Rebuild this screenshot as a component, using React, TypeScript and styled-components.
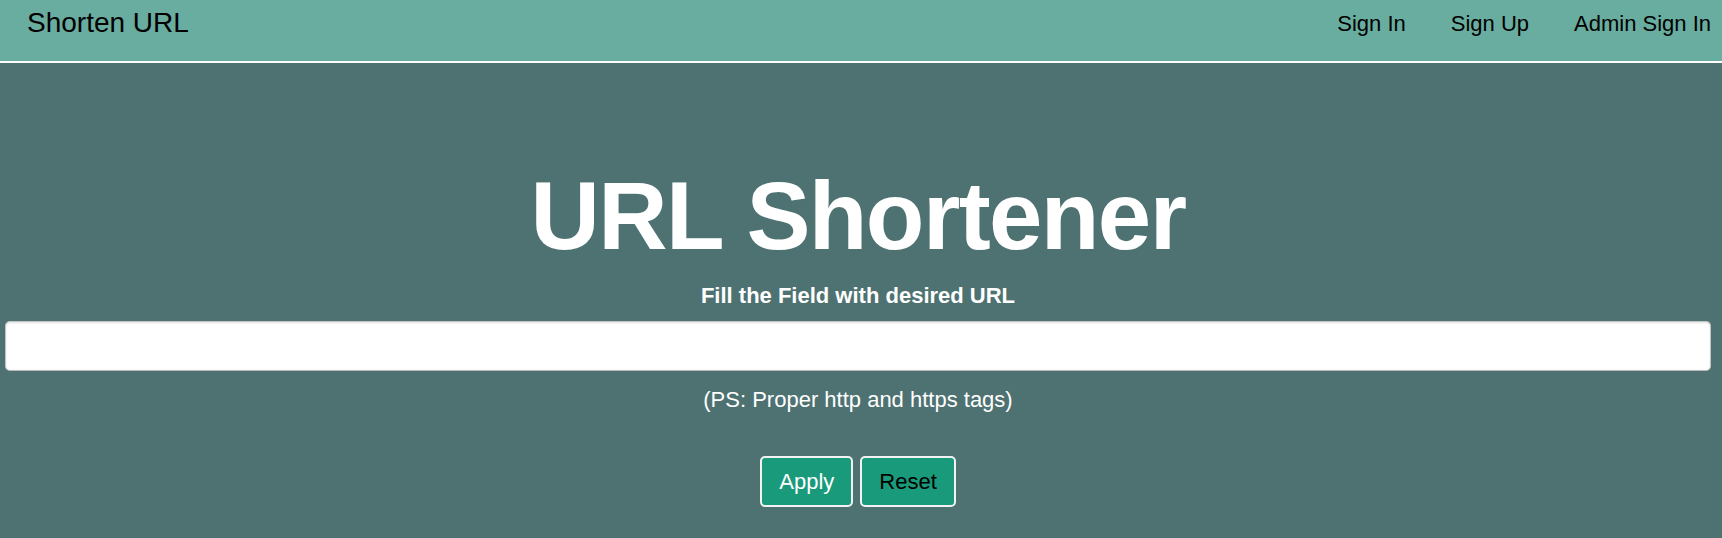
import React from "react";
import styled, { createGlobalStyle } from "styled-components";

const GlobalStyle = createGlobalStyle`
  html, body {
    margin: 0;
    padding: 0;
    background: #4e7271;
  }
  body {
    font-family: "Liberation Sans", Arial, Helvetica, sans-serif;
  }
  * { box-sizing: border-box; }
`;

const Page = styled.div`
  width: 100%;
  min-height: 538px;
  background: #4e7271;
`;

const NavBar = styled.nav`
  display: flex;
  justify-content: space-between;
  align-items: flex-start;
  height: 63px;
  padding: 0 11px 0 27px;
  background: #68ad9f;
  border-bottom: 2px solid #ffffff;
`;

const Brand = styled.a`
  margin-top: 6px;
  font-size: 28px;
  line-height: 34px;
  color: #000;
  text-decoration: none;
`;

const NavLinks = styled.div`
  display: flex;
  gap: 45px;
  margin-top: 11px;
`;

const NavLink = styled.a`
  font-size: 22px;
  line-height: 26px;
  color: #000;
  text-decoration: none;
`;

const Main = styled.main`
  display: flex;
  flex-direction: column;
  align-items: center;
  padding: 103px 11px 0 5px;
`;

const Title = styled.h1`
  margin: 0 0 17px;
  font-size: 96px;
  line-height: 100px;
  font-weight: 700;
  letter-spacing: -1.6px;
  color: #fff;
`;

const Label = styled.label`
  font-size: 22px;
  line-height: 26px;
  font-weight: 700;
  color: #fff;
`;

const UrlInput = styled.input`
  width: 100%;
  height: 50px;
  margin-top: 12px;
  padding: 0 12px;
  border: 1px solid #c4c4c4;
  border-bottom-color: #b8b8b8;
  border-radius: 5px;
  background: #fff;
  box-shadow: inset 0 1px 2px rgba(0, 0, 0, 0.12);
  font-size: 22px;
  font-family: inherit;
  outline: none;
`;

const Hint = styled.p`
  margin: 16px 0 0;
  font-size: 22px;
  line-height: 26px;
  color: #fff;
`;

const Buttons = styled.div`
  display: flex;
  gap: 7px;
  margin-top: 43px;
`;

const ActionButton = styled.button<{ $dark?: boolean }>`
  height: 51px;
  padding: 0 17px;
  border: 2px solid #f2f2f2;
  border-radius: 5px;
  background: #199a7b;
  color: ${(p) => (p.$dark ? "#000" : "#fff")};
  font-family: inherit;
  font-size: 22px;
  line-height: 26px;
  cursor: pointer;
`;

export default function App() {
  return (
    <Page>
      <GlobalStyle />
      <NavBar>
        <Brand href="#">Shorten URL</Brand>
        <NavLinks>
          <NavLink href="#">Sign In</NavLink>
          <NavLink href="#">Sign Up</NavLink>
          <NavLink href="#">Admin Sign In</NavLink>
        </NavLinks>
      </NavBar>
      <Main>
        <Title>URL Shortener</Title>
        <Label htmlFor="url">Fill the Field with desired URL</Label>
        <UrlInput id="url" type="text" />
        <Hint>(PS: Proper http and https tags)</Hint>
        <Buttons>
          <ActionButton>Apply</ActionButton>
          <ActionButton $dark>Reset</ActionButton>
        </Buttons>
      </Main>
    </Page>
  );
}
